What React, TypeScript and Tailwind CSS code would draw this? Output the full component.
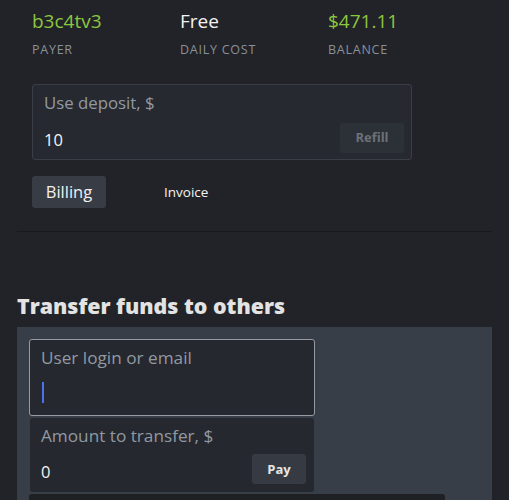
import React from 'react'

const font = { fontFamily: '"Open Sans", "Noto Sans", sans-serif' }

function Stat({ value, label, green }: { value: string; label: string; green?: boolean }) {
  return (
    <div className="w-[148px]">
      <div className={`text-[19px] leading-[26px] ${green ? 'text-[#8dc63f]' : 'text-[#f2f2f2]'}`}>{value}</div>
      <div className="mt-[8px] text-[12.5px] leading-[16px] tracking-[0.06em] text-[#8a9098]">{label}</div>
    </div>
  )
}

export default function App() {
  return (
    <div style={font} className="w-[509px] h-[500px] overflow-hidden bg-[#212328] px-[17px]">
      {/* Balance summary */}
      <div className="flex pl-[15px] pt-[8px]">
        <Stat value="b3c4tv3" label="PAYER" green />
        <Stat value="Free" label="DAILY COST" />
        <Stat value="$471.11" label="BALANCE" green />
      </div>

      {/* Deposit field */}
      <div className="ml-[15px] mt-[26px] w-[380px] h-[76px] rounded-[3px] border border-[#3a3e46] bg-[#262930] pl-[11px] pr-[7px] pt-[7px]">
        <div className="text-[16.8px] leading-[22px] text-[#9299a2]">Use deposit, $</div>
        <div className="flex items-center justify-between mt-[9px]">
          <span className="text-[16.5px] text-[#f4f4f4] mt-[5px]">10</span>
          <button className="w-[64px] h-[30px] rounded-[3px] bg-[#2c3037] text-[13px] font-bold text-[#6c7179]">Refill</button>
        </div>
      </div>

      {/* Tabs */}
      <div className="flex items-center ml-[15px] mt-[16px]">
        <button className="h-[32px] w-[74px] rounded-[3px] bg-[#383d45] text-[16.5px] text-[#f0f0f0]">Billing</button>
        <span className="ml-[58px] text-[13.5px] font-medium text-[#f4f4f4]">Invoice</span>
      </div>

      <div className="mt-[23px] h-px bg-[#18191d]" />

      <h2 className="mt-[60px] text-[21.4px] leading-[28px] font-extrabold text-[#e3e3e3]">Transfer funds to others</h2>

      {/* Transfer panel */}
      <div className="mt-[7px] h-[200px] bg-[#383e47] px-[12px] pt-[12px]">
        <div className="w-[286px] h-[77px] rounded-[3px] border border-[#959ba3] bg-[#25282e] pl-[11px] pt-[7px]">
          <div className="text-[17.2px] leading-[22px] text-[#9299a2]">User login or email</div>
          <div className="mt-[13px] ml-[1px] w-[2px] h-[21px] bg-[#4a72f0]" />
        </div>
        <div className="ml-[1px] mt-[2px] w-[284px] h-[74px] rounded-[3px] bg-[#25282e] pl-[11px] pr-[8px] pt-[7px]">
          <div className="text-[17.2px] leading-[22px] text-[#9299a2]">Amount to transfer, $</div>
          <div className="flex items-center justify-between mt-[7px]">
            <span className="text-[16.5px] text-[#f4f4f4] mt-[6px]">0</span>
            <button className="w-[54px] h-[30px] rounded-[3px] bg-[#363b43] text-[13px] font-bold text-[#e6e6e6]">Pay</button>
          </div>
        </div>
        <div className="mt-[2px] w-[416px] h-[20px] rounded-t-[3px] bg-[#1e2024]" />
      </div>
    </div>
  )
}
